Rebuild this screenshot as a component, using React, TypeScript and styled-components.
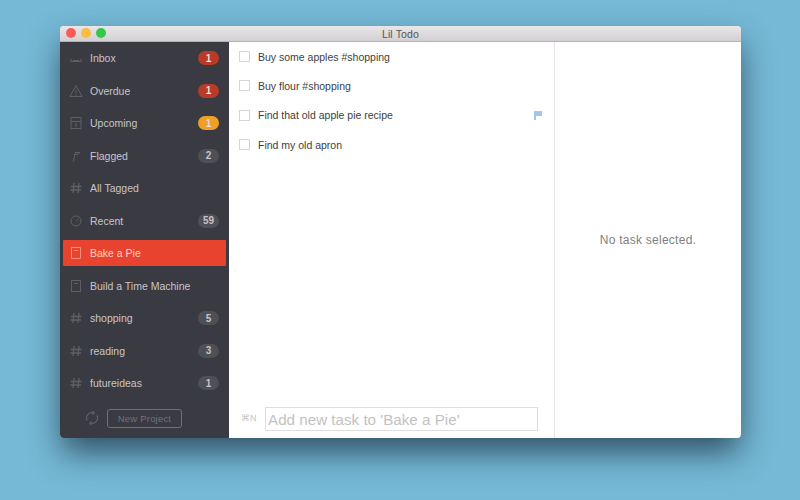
import React from 'react';
import styled, { createGlobalStyle } from 'styled-components';

const GlobalStyle = createGlobalStyle`
  html, body {
    margin: 0;
    padding: 0;
    width: 800px;
    height: 500px;
    overflow: hidden;
    background: #75b9d6;
    font-family: "Liberation Sans", Arial, sans-serif;
  }
`;

const Page = styled.div`
  width: 800px;
  height: 500px;
  padding: 26px 59px 0 60px;
  box-sizing: border-box;
`;

const Window = styled.div`
  width: 681px;
  height: 412px;
  display: flex;
  flex-direction: column;
  border-radius: 4px;
  overflow: hidden;
  background: #fff;
  box-shadow: 0 16px 32px -2px rgba(28, 50, 66, 0.78);
`;

const TitleBar = styled.div`
  height: 16px;
  box-sizing: border-box;
  flex: none;
  position: relative;
  display: flex;
  align-items: center;
  justify-content: center;
  background: linear-gradient(#e8e6e8, #d3d0d3);
  border-bottom: 1px solid #b4b2b4;
  font-size: 10.5px;
  letter-spacing: 0.15px;
  color: #555;
`;

const Lights = styled.div`
  position: absolute;
  left: 6px;
  top: 2px;
  display: flex;
  gap: 5px;
`;

const Light = styled.span<{ $color: string }>`
  width: 10px;
  height: 10px;
  border-radius: 50%;
  background: ${(p) => p.$color};
`;

const Body = styled.div`
  flex: 1;
  min-height: 0;
  display: flex;
`;

const Sidebar = styled.div`
  width: 169px;
  flex: none;
  display: flex;
  flex-direction: column;
  background: #3a3a42;
`;

const Nav = styled.div`
  padding: 0 3px;
  display: flex;
  flex-direction: column;
`;

const NavRow = styled.div<{ $active?: boolean }>`
  height: 32.5px;
  display: flex;
  align-items: center;
  box-sizing: border-box;
  padding: 0 7px 0 5px;
  border-radius: 1px;
  font-size: 10.5px;
  color: ${(p) => (p.$active ? '#ffd3cc' : '#c6c6ca')};
  background: ${(p) => (p.$active ? '#e8432f' : 'transparent')};
  ${(p) => p.$active && 'height: 26px; margin: 3px 0 3.5px;'}
`;

const IconSlot = styled.span<{ $active?: boolean }>`
  width: 16px;
  height: 16px;
  margin-right: 6px;
  flex: none;
  display: flex;
  color: ${(p) => (p.$active ? '#f98c7c' : '#5f5f67')};
`;

const NavLabel = styled.span`
  flex: 1;
`;

const Badge = styled.span<{ $color?: string }>`
  width: 21px;
  height: 14px;
  border-radius: 7px;
  display: flex;
  align-items: center;
  justify-content: center;
  font-size: 10px;
  font-weight: 700;
  color: ${(p) => (p.$color ? '#f3dcd2' : '#c4c4c8')};
  background: ${(p) => p.$color || '#4f4f56'};
`;

const SideFooter = styled.div`
  flex: 1;
  display: flex;
  align-items: flex-start;
  padding: 9px 0 0 24px;
  gap: 7px;
`;

const SyncIcon = styled.span`
  width: 16px;
  height: 18px;
  display: flex;
  align-items: center;
  justify-content: center;
  color: #6b6b72;
`;

const NewProject = styled.div`
  width: 75px;
  height: 19px;
  box-sizing: border-box;
  border: 1px solid #6f6f76;
  border-radius: 3px;
  display: flex;
  align-items: center;
  justify-content: center;
  font-size: 9.5px;
  letter-spacing: 0.2px;
  color: #72727a;
`;

const ListPane = styled.div`
  width: 325px;
  flex: none;
  display: flex;
  flex-direction: column;
  background: #fff;
`;

const Tasks = styled.div`
  flex: 1;
`;

const TaskRow = styled.div`
  height: 29.3px;
  display: flex;
  align-items: center;
  padding: 0 12px 0 10px;
  font-size: 10.5px;
  color: #3e3e40;
`;

const Check = styled.span`
  width: 9px;
  height: 9px;
  margin-right: 8px;
  flex: none;
  border: 1px solid #d6d6d6;
`;

const TaskText = styled.span`
  flex: 1;
`;

const AddBar = styled.div`
  height: 31px;
  flex: none;
  display: flex;
  align-items: flex-start;
  padding-left: 12px;
`;

const Shortcut = styled.span`
  width: 24px;
  margin-top: 6px;
  font-size: 9px;
  color: #c4c4c4;
`;

const AddInput = styled.div`
  width: 273px;
  height: 24px;
  box-sizing: border-box;
  border: 1px solid #dedede;
  padding-left: 2px;
  display: flex;
  align-items: center;
  font-size: 15.2px;
  color: #c2c2c2;
`;

const DetailPane = styled.div`
  flex: 1;
  display: flex;
  align-items: center;
  justify-content: center;
  border-left: 1px solid #e4e4e4;
  font-size: 12px;
  letter-spacing: 0.25px;
  color: #7f7f7f;
`;

const Svg = ({ children }: { children: React.ReactNode }) => (
  <svg width="16" height="16" viewBox="0 0 16 16" fill="none" stroke="currentColor" strokeWidth="1">
    {children}
  </svg>
);

const icons: Record<string, JSX.Element> = {
  inbox: <Svg><path d="M3 8.5V11.5H13V8.5M5 10.5H11" /></Svg>,
  warning: <Svg><path d="M8 2.5L14 13.5H2ZM8 6.5V10.5M8 11.5V12.5" /></Svg>,
  calendar: <Svg><path d="M3 2.5H13V13.5H3ZM3 6.5H13M8 8.5V12M7 9H8" /></Svg>,
  flag: <Svg><path d="M5.5 13.5L7 4.5H12L10 6.5H6.6" /></Svg>,
  tag: <Svg><path d="M6 3L5 13M11 3L10 13M3 6.5H13.5M2.5 10H13" strokeWidth="1.3" /></Svg>,
  clock: <Svg><circle cx="8" cy="8" r="5" /><path d="M8 8L10.5 6" /></Svg>,
  book: <Svg><path d="M3.5 2.5H12.5V13.5H3.5ZM6 5.5H10" /></Svg>,
};

const nav = [
  { icon: 'inbox', label: 'Inbox', count: 1, color: '#b83a28' },
  { icon: 'warning', label: 'Overdue', count: 1, color: '#b83a28' },
  { icon: 'calendar', label: 'Upcoming', count: 1, color: '#efa024' },
  { icon: 'flag', label: 'Flagged', count: 2 },
  { icon: 'tag', label: 'All Tagged' },
  { icon: 'clock', label: 'Recent', count: 59 },
  { icon: 'book', label: 'Bake a Pie', active: true },
  { icon: 'book', label: 'Build a Time Machine' },
  { icon: 'tag', label: 'shopping', count: 5 },
  { icon: 'tag', label: 'reading', count: 3 },
  { icon: 'tag', label: 'futureideas', count: 1 },
];

const tasks = [
  { text: 'Buy some apples #shopping' },
  { text: 'Buy flour #shopping' },
  { text: 'Find that old apple pie recipe', flagged: true },
  { text: 'Find my old apron' },
];

export default function App() {
  return (
    <Page>
      <GlobalStyle />
      <Window>
        <TitleBar>
          <Lights>
            <Light $color="#fc5b57" />
            <Light $color="#fdbb40" />
            <Light $color="#34c84a" />
          </Lights>
          Lil Todo
        </TitleBar>
        <Body>
          <Sidebar>
            <Nav>
              {nav.map((item) => (
                <NavRow key={item.label} $active={item.active}>
                  <IconSlot $active={item.active}>{icons[item.icon]}</IconSlot>
                  <NavLabel>{item.label}</NavLabel>
                  {item.count !== undefined && <Badge $color={item.color}>{item.count}</Badge>}
                </NavRow>
              ))}
            </Nav>
            <SideFooter>
              <SyncIcon>
                <svg width="14" height="16" viewBox="0 0 14 16" fill="none" stroke="currentColor" strokeWidth="1">
                  <path d="M2 10.5A5.5 5.5 0 0 1 8.5 2.8M12 5.5A5.5 5.5 0 0 1 5.5 13.2" />
                  <path d="M7.5 1L9.5 3L7.5 4.5M6.5 11.5L4.5 13L6.5 15" />
                </svg>
              </SyncIcon>
              <NewProject>New Project</NewProject>
            </SideFooter>
          </Sidebar>
          <ListPane>
            <Tasks>
              {tasks.map((task) => (
                <TaskRow key={task.text}>
                  <Check />
                  <TaskText>{task.text}</TaskText>
                  {task.flagged && (
                    <svg width="8" height="9" viewBox="0 0 8 9">
                      <path d="M0 0H8V5H2V9H0Z" fill="#a4c4f0" />
                    </svg>
                  )}
                </TaskRow>
              ))}
            </Tasks>
            <AddBar>
              <Shortcut>⌘N</Shortcut>
              <AddInput>Add new task to 'Bake a Pie'</AddInput>
            </AddBar>
          </ListPane>
          <DetailPane>No task selected.</DetailPane>
        </Body>
      </Window>
    </Page>
  );
}
